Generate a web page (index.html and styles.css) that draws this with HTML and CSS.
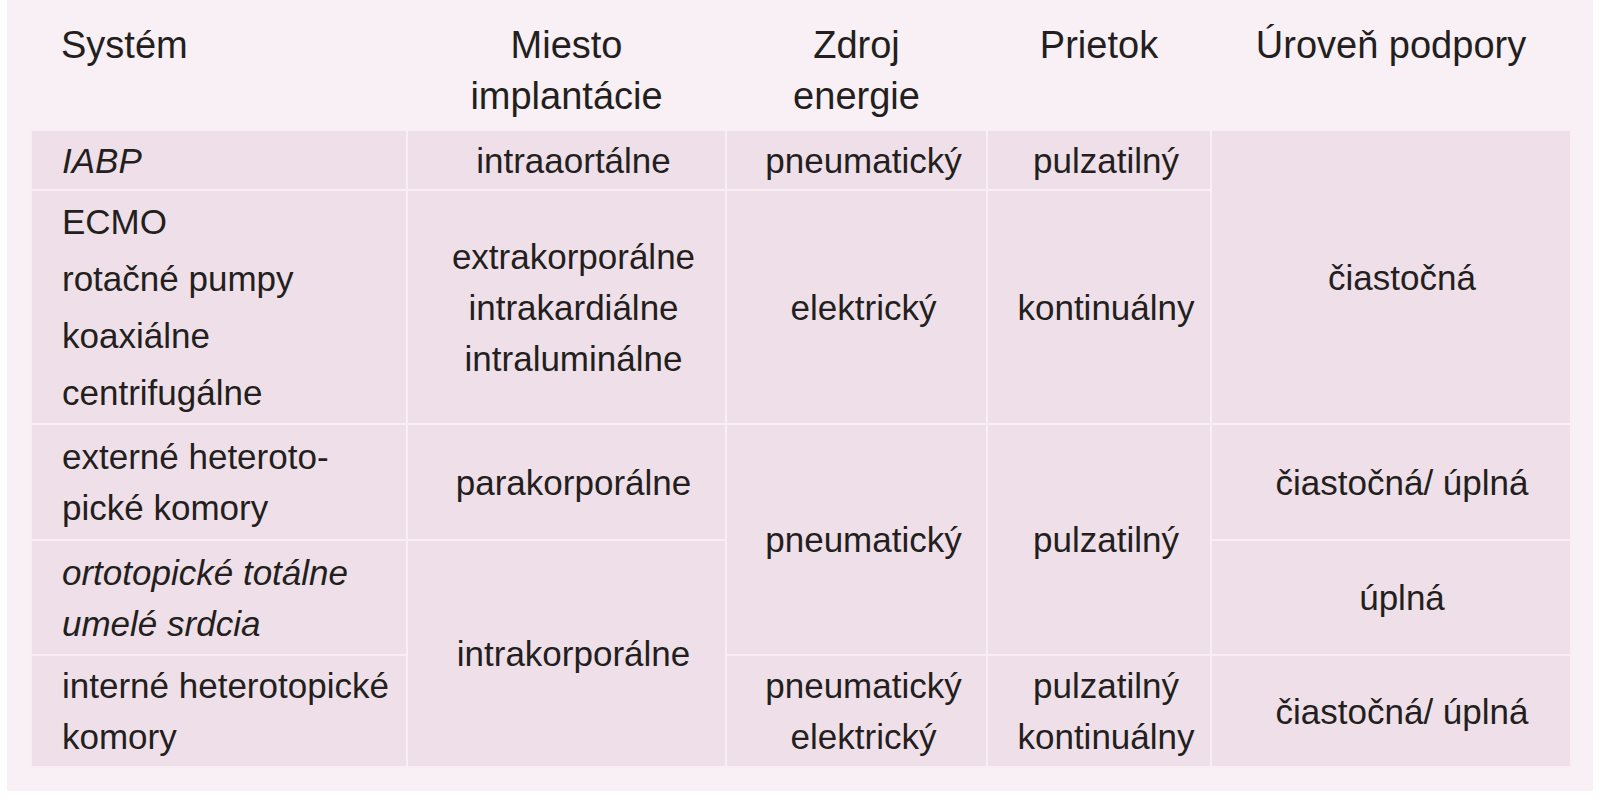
FILE: index.html
```html
<!DOCTYPE html>
<html lang="sk">
<head>
<meta charset="utf-8">
<title>Systémy mechanickej podpory obehu</title>
<link rel="stylesheet" href="styles.css">
</head>
<body>
<div class="panel">
  <table class="grid">
    <colgroup>
      <col class="c1"><col class="c2"><col class="c3"><col class="c4"><col class="c5">
    </colgroup>
    <thead>
      <tr>
        <th class="left">Systém</th>
        <th>Miesto<br>implantácie</th>
        <th>Zdroj<br>energie</th>
        <th>Prietok</th>
        <th>Úroveň podpory</th>
      </tr>
    </thead>
    <tbody>
      <tr class="r1">
        <td class="left"><i>IABP</i></td>
        <td>intraaortálne</td>
        <td>pneumatický</td>
        <td>pulzatilný</td>
        <td rowspan="2" class="lvl">čiastočná</td>
      </tr>
      <tr class="r2">
        <td class="left ecmo">ECMO<br>rotačné pumpy<br>koaxiálne<br>centrifugálne</td>
        <td>extrakorporálne<br>intrakardiálne<br>intraluminálne</td>
        <td>elektrický</td>
        <td>kontinuálny</td>
      </tr>
      <tr class="r3">
        <td class="left">externé heteroto-<br>pické komory</td>
        <td>parakorporálne</td>
        <td rowspan="2">pneumatický</td>
        <td rowspan="2">pulzatilný</td>
        <td class="lvl">čiastočná/ úplná</td>
      </tr>
      <tr class="r4">
        <td class="left"><i>ortotopické totálne<br>umelé srdcia</i></td>
        <td rowspan="2">intrakorporálne</td>
        <td class="lvl">úplná</td>
      </tr>
      <tr class="r5">
        <td class="left">interné heterotopické<br>komory</td>
        <td>pneumatický<br>elektrický</td>
        <td>pulzatilný<br>kontinuálny</td>
        <td class="lvl">čiastočná/ úplná</td>
      </tr>
    </tbody>
  </table>
</div>
</body>
</html>
```

FILE: styles.css
```css
html, body {
  margin: 0;
  padding: 0;
  background: #ffffff;
}

body {
  font-family: "Liberation Sans", Arial, sans-serif;
  color: #231f20;
}

.panel {
  margin-left: 7px;
  width: 1586px;
  height: 791px;
  background: #f8f0f4;
  padding-left: 23px;
  box-sizing: border-box;
}

.grid {
  border-collapse: collapse;
  table-layout: fixed;
  width: 1540px;
}

.c1 { width: 376px; }
.c2 { width: 319px; }
.c3 { width: 261px; }
.c4 { width: 224px; }
.c5 { width: 360px; }

.grid th {
  font-weight: normal;
  font-size: 38px;
  line-height: 51px;
  height: 130px;
  padding: 20px 4px 0;
  box-sizing: border-box;
  vertical-align: top;
  text-align: center;
  border: none;
}

.grid td {
  font-size: 35px;
  line-height: 51px;
  padding: 0 0 0 14px;
  vertical-align: middle;
  text-align: center;
  background: #efdfe8;
  border: 2px solid #f8eef4;
}

.grid td.lvl {
  padding-left: 22px;
}

.grid .left {
  text-align: left;
  padding-left: 30px;
}

.grid td.ecmo {
  line-height: 57px;
}

.r1 { height: 60px; }
.r2 { height: 234px; }
.r3 { height: 116px; }
.r4 { height: 115px; }
.r5 { height: 112px; }
```
